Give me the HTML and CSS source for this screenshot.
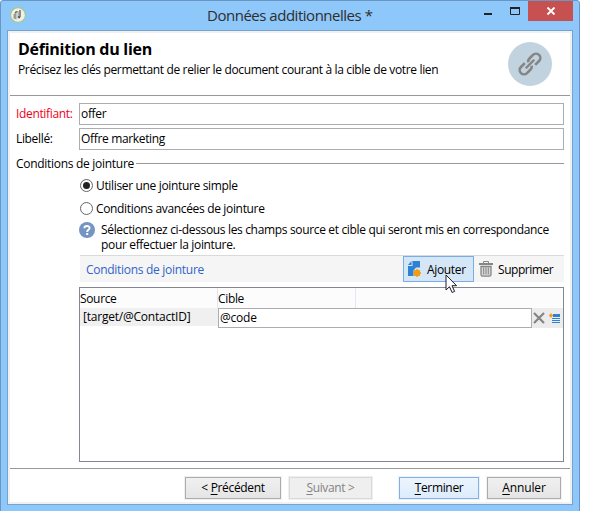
FILE: index.html
```html
<!DOCTYPE html>
<html lang="fr">
<head>
<meta charset="utf-8">
<title>Données additionnelles</title>
<link rel="stylesheet" href="styles.css">
</head>
<body>
<div class="window">
  <div class="titlebar">
    <svg class="app-icon" width="16" height="16" viewBox="0 0 16 16"><circle cx="8" cy="8" r="7.400" fill="#f0f0ee" stroke="#a9c878" stroke-width="1.100"/><path d="M3.500 7l3-1.500v7l-3-1z" fill="#9a9e98"/><path d="M7.500 4.500H9v7H7.500z" fill="#b4b8b2"/><path d="M5 5.500l2.500-1M10 3v7M8 9.500l2 1.500" stroke="#3d423e" stroke-width="1.100" fill="none"/></svg>
    <h1 class="title"><span>Données additionnelles *</span></h1>
    <div class="controls">
      <svg width="48" height="20" viewBox="0 0 48 20"><path d="M4 13h8v2H4z" fill="#222"/><path d="M30.500 7.500h9v7h-9z" fill="none" stroke="#222"/><path d="M30 7h10v2H30z" fill="#222"/></svg>
      <div class="close"><svg width="10" height="8" viewBox="0 0 10 8"><path d="M1.500.5l7 7M8.500.5l-7 7" stroke="#fff" stroke-width="1.900"/></svg></div>
    </div>
  </div>
  <div class="client">
    <header class="header">
      <div>
        <h2 class="heading"><span>Définition du lien</span></h2>
        <p class="subtitle"><span>Précisez les clés permettant de relier le document courant à la cible de votre lien</span></p>
      </div>
      <svg class="link-icon" width="44" height="44" viewBox="0 0 44 44"><circle cx="22" cy="22" r="22" fill="#c0d3df"/><g transform="translate(22 22) rotate(-45)" fill="none" stroke="#858585" stroke-width="2.600"><path d="M-3 -4.300H-8.500a4.300 4.300 0 0 0 0 8.600H-3.500a4.300 4.300 0 0 0 3.500-1.800M3 4.300H8.500a4.300 4.300 0 0 0 0-8.600H3.500a4.300 4.300 0 0 0-3.500 1.800"/><path d="M-6 0H6" stroke-width="2.400"/></g></svg>
    </header>
    <main class="body">
      <div class="row"><label class="label required"><span>Identifiant:</span></label><div class="field"><span>offer</span></div></div>
      <div class="row"><label class="label"><span>Libellé:</span></label><div class="field"><span>Offre marketing</span></div></div>
      <div class="legend"><span>Conditions de jointure</span><i></i></div>
      <div class="options">
        <div class="option"><b class="radio checked"></b><span>Utiliser une jointure simple</span></div>
        <div class="option second"><b class="radio"></b><span>Conditions avancées de jointure</span></div>
        <div class="help">
          <svg width="16" height="16" viewBox="0 0 16 16"><circle cx="8" cy="8" r="8" fill="#7494c4"/><path d="M5.400 6.200C5.400 3.300 10.600 3.300 10.600 6c0 1.800-2.400 1.900-2.400 3.900" fill="none" stroke="#fff" stroke-width="1.900"/><path d="M7.200 11h2v2h-2z" fill="#fff"/></svg>
          <p><span>Sélectionnez ci-dessous les champs source et cible qui seront mis en correspondance</span><span>pour effectuer la jointure.</span></p>
        </div>
        <div class="toolbar">
          <span class="toolbar-title">Conditions de jointure</span>
          <div class="tool active">
            <svg width="14" height="16" viewBox="0 0 14 16"><path d="M4.500 0H12v6.500H8L5.500 9.500V15H0V5h4.500z" fill="#2d82d2"/><path d="M3.500 0v4H0z" fill="#2d82d2"/><g transform="translate(9 12)" stroke="#f29a11" stroke-width="1.300"><circle r="2.600" fill="#f29a11"/><path d="M0-4V4M-4 0H4M-2.800-2.800L2.800 2.800M2.800-2.800L-2.800 2.800"/></g></svg>
            <span>Ajouter</span>
            <svg class="cursor" width="13" height="20" viewBox="0 0 13 20"><path d="M1 1v15l3.500-3.300 2.600 5.800 2.500-1.100-2.600-5.700h4.600z" fill="#fff" stroke="#1c1c2c"/></svg>
          </div>
          <div class="tool delete">
            <svg width="14" height="16" viewBox="0 0 14 16"><path d="M4.500 2.500v-2h5v2" fill="none" stroke="#858585"/><path d="M0 2h14v2H0z" fill="#858585"/><path d="M2 5.500v8q0 1.700 1.700 1.700h6.600q1.700 0 1.700-1.700v-8z" fill="#d8d8d8" stroke="#858585" stroke-width="1.300"/><path d="M4.700 6.500v7M7 6.500v7M9.300 6.500v7" stroke="#858585"/></svg>
            <span>Supprimer</span>
          </div>
        </div>
        <div class="table">
          <div class="thead"><div><span>Source</span></div><div><span>Cible</span></div><div></div></div>
          <div class="trow">
            <div class="source"><span>[target/@ContactID]</span></div>
            <div class="target"><span>@code</span></div>
            <div class="actions">
              <svg width="12" height="12" viewBox="0 0 12 12"><path d="M1 1l10 10M11 1L1 11" stroke="#858585" stroke-width="2.200"/></svg>
              <svg width="12" height="11" viewBox="0 0 12 11"><path d="M4 1h7v3H4zM3 5h8v1H3zM3 7h8v1H3zM3 9h8v1H3z" fill="#2d82d2"/><path d="M0 2.500h4M2 .5v4" stroke="#f29a11" stroke-width="1.600"/></svg>
            </div>
          </div>
        </div>
      </div>
    </main>
    <footer class="footer">
      <button class="btn prev"><span>&lt; <u>P</u>récédent</span></button>
      <button class="btn next"><span><u>S</u>uivant &gt;</span></button>
      <button class="btn finish"><span><u>T</u>erminer</span></button>
      <button class="btn cancel"><span><u>A</u>nnuler</span></button>
    </footer>
  </div>
</div>
</body>
</html>
```
FILE: styles.css
```css
* { box-sizing: border-box; }
body { margin: 0; background: #fff; color: #000; font: 12px/15px "Open Sans", "Noto Sans", sans-serif; letter-spacing: -.34px; height: 511px; overflow: hidden; }
h1, h2, p { margin: 0; font-weight: 400; }
span { white-space: nowrap; }
svg { flex: none; }
.window { width: 580px; height: 520px; background: #8ec7f9; border: 1px solid #6996c2; border-radius: 3px 3px 0 0; padding: 0 6px; }
.titlebar { height: 29px; display: flex; align-items: flex-start; }
.app-icon { margin: 6px 0 0 3px; }
.title { margin-left: 181px; padding-top: 5px; font-size: 15px; line-height: 19px; letter-spacing: -.48px; color: #2e2e2e; width: 273px; }
.controls { display: flex; width: 93px; }
.controls > svg { margin-top: -1px; }
.close { width: 45px; height: 20px; background: #c75050; display: flex; align-items: center; justify-content: center; flex: none; }
.client { height: 475px; border: 1px solid #74a3d0; background: #fff; box-shadow: inset 0 0 0 2px #f0f0f0; padding: 2px; display: flex; flex-direction: column; }
.header { height: 63px; border-bottom: 1px solid #989898; padding: 7px 18px 0 8px; display: flex; justify-content: space-between; flex: none; }
.heading { font-size: 16px; font-weight: 700; line-height: 18px; letter-spacing: -.26px; }
.subtitle { margin-top: 4px; letter-spacing: -.35px; }
.link-icon { margin-top: 2px; }
.body { flex: 1; padding: 7px 6px 0; }
.row { display: flex; height: 22px; margin-bottom: 3px; }
.label { width: 63px; line-height: 21px; }
.required { color: #f00019; }
.field { flex: 1; border: 1px solid #abadb3; padding-left: 1px; line-height: 19px; }
.legend { display: flex; align-items: center; height: 15px; margin-top: 6px; letter-spacing: -.29px; }
.legend i { flex: 1; height: 1px; background: #989898; margin-left: 2px; }
.options { margin-left: 63px; padding-top: 7px; }
.option { display: flex; align-items: center; height: 15px; gap: 3px; padding-left: 1px; }
.option.second { margin-top: 8px; }
.radio { width: 13px; height: 13px; border: 1px solid #666; border-radius: 50%; display: flex; align-items: center; justify-content: center; }
.checked::after { content: ""; width: 7px; height: 7px; border-radius: 50%; background: #222; }
.help { display: flex; gap: 6px; height: 32px; margin-top: 6px; }
.help span { display: block; }
.toolbar { height: 27px; margin: 1px 0 0 1px; border-top: 1px solid #dadada; background: #f5f5f5; display: flex; align-items: center; }
.toolbar-title { width: 323px; padding-left: 6px; color: #3064c8; letter-spacing: -.29px; }
.tool { display: flex; align-items: center; height: 26px; flex: none; }
.active { position: relative; width: 71px; border: 1px solid #78aee5; background: #d5e6f6; padding-left: 4px; gap: 5px; }
.cursor { position: absolute; left: 41px; top: 17px; }
.delete { padding-left: 5px; gap: 5px; letter-spacing: -.45px; }
.table { height: 175px; border: 1px solid #828790; margin-top: 5px; }
.thead { height: 20px; display: flex; background: #fcfcfd; line-height: 22px; }
.thead > div { width: 138px; border-right: 1px solid #e2e8f0; }
.thead > div:last-child { border: 0; }
.trow { display: flex; height: 20px; background: linear-gradient(#f0f0f0 18px, #fff 18px); line-height: 18px; }
.source { width: 138px; padding-left: 3px; letter-spacing: -.22px; }
.target { width: 314px; background: #fff; border: 1px solid #abadb3; padding-left: 1px; line-height: 17px; letter-spacing: -.2px; }
.actions { flex: 1; display: flex; align-items: center; gap: 4px; padding-left: 1px; background: #ececec; }
.footer { height: 34px; border-top: 1px solid #989898; padding: 8px 9px 0; display: flex; justify-content: flex-end; gap: 8px; flex: none; }
.btn { height: 22px; border: 1px solid #acacac; background: linear-gradient(#f0f0f0, #e5e5e5); outline: 1px solid #f0f0f0; font: inherit; letter-spacing: -.34px; color: #000; padding: 0; line-height: 18px; }
.btn u { text-underline-offset: 2px; }
.prev { width: 96px; }
.next { width: 83px; border-color: #d9d9d9; background: #efefef; color: #838383; }
.finish { width: 80px; margin-left: 19px; border-color: #7eb4ea; background: linear-gradient(#ecf4fc, #dcecfc); }
.cancel { width: 74px; letter-spacing: -.15px; }
```
